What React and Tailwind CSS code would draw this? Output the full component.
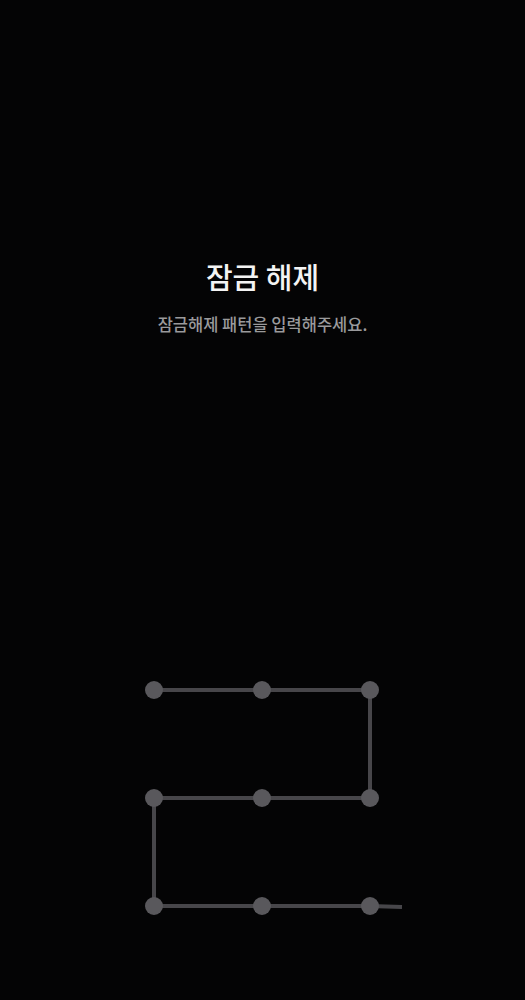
import React from "react";

const dots = [
  [154, 19], [262, 19], [370, 19],
  [154, 127], [262, 127], [370, 127],
  [154, 235], [262, 235], [370, 235],
];

// pattern path drawn through the grid (ends a bit past the last dot)
const path = "M154 19 L262 19 L370 19 L370 127 L262 127 L154 127 L154 235 L262 235 L370 235 L402 236";

export default function App() {
  return (
    <div
      className="w-full h-[1000px] bg-[#040405] flex flex-col items-center"
      style={{ fontFamily: '"Noto Sans CJK KR", "Noto Sans", sans-serif' }}
    >
      <h1 className="mt-[257px] text-[29px] leading-[38px] font-medium text-[#f4f4f4]">
        잠금 해제
      </h1>
      <p className="mt-[18px] text-[16.5px] leading-[22px] font-medium text-[#9a9a9c]">
        잠금해제 패턴을 입력해주세요.
      </p>
      <svg width="525" height="260" viewBox="0 0 525 260" className="mt-[336px] block">
        <path d={path} fill="none" stroke="#47464a" strokeWidth="4" strokeLinejoin="round" />
        {dots.map(([x, y], i) => (
          <circle key={i} cx={x} cy={y} r="9" fill="#59585c" />
        ))}
      </svg>
    </div>
  );
}
